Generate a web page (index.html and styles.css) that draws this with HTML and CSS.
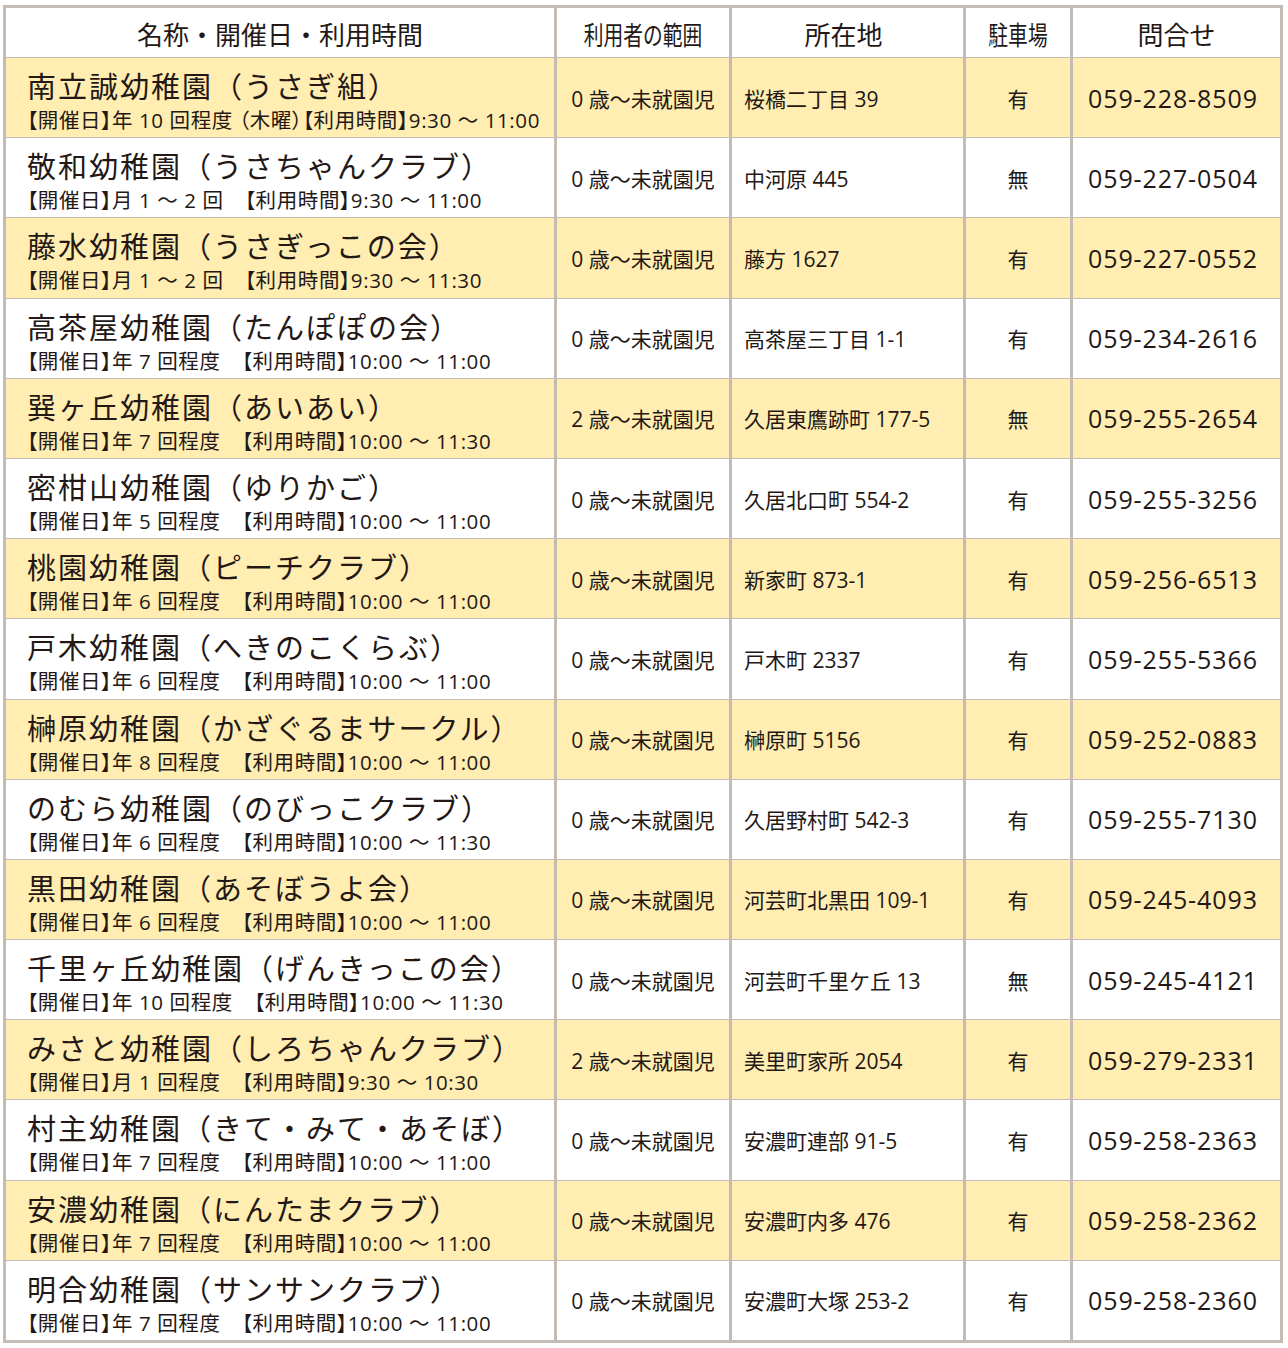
FILE: index.html
```html
<!DOCTYPE html>
<html lang="ja">
<head>
<meta charset="utf-8">
<title>幼稚園 未就園児の会</title>
<link rel="stylesheet" href="styles.css">
</head>
<body>
<div class="table">
  <div class="row head">
    <div class="cell c1">名称・開催日・利用時間</div>
    <div class="cell c2"><span class="narrow">利用者の範囲</span></div>
    <div class="cell c3">所在地</div>
    <div class="cell c4"><span class="narrow">駐車場</span></div>
    <div class="cell c5">問合せ</div>
  </div>

  <div class="row yellow">
    <div class="cell c1"><div class="name">南立誠幼稚園（うさぎ組）</div><div class="info">【開催日】年 10 回程度 （木曜）【利用時間】9:30 〜 11:00</div></div>
    <div class="cell c2">0 歳〜未就園児</div>
    <div class="cell c3">桜橋二丁目 39</div>
    <div class="cell c4">有</div>
    <div class="cell c5">059-228-8509</div>
  </div>
  <div class="row">
    <div class="cell c1"><div class="name">敬和幼稚園（うさちゃんクラブ）</div><div class="info">【開催日】月 1 〜 2 回　【利用時間】9:30 〜 11:00</div></div>
    <div class="cell c2">0 歳〜未就園児</div>
    <div class="cell c3">中河原 445</div>
    <div class="cell c4">無</div>
    <div class="cell c5">059-227-0504</div>
  </div>
  <div class="row yellow">
    <div class="cell c1"><div class="name">藤水幼稚園（うさぎっこの会）</div><div class="info">【開催日】月 1 〜 2 回　【利用時間】9:30 〜 11:30</div></div>
    <div class="cell c2">0 歳〜未就園児</div>
    <div class="cell c3">藤方 1627</div>
    <div class="cell c4">有</div>
    <div class="cell c5">059-227-0552</div>
  </div>
  <div class="row">
    <div class="cell c1"><div class="name">高茶屋幼稚園（たんぽぽの会）</div><div class="info">【開催日】年 7 回程度　【利用時間】10:00 〜 11:00</div></div>
    <div class="cell c2">0 歳〜未就園児</div>
    <div class="cell c3">高茶屋三丁目 1-1</div>
    <div class="cell c4">有</div>
    <div class="cell c5">059-234-2616</div>
  </div>
  <div class="row yellow">
    <div class="cell c1"><div class="name">巽ヶ丘幼稚園（あいあい）</div><div class="info">【開催日】年 7 回程度　【利用時間】10:00 〜 11:30</div></div>
    <div class="cell c2">2 歳〜未就園児</div>
    <div class="cell c3">久居東鷹跡町 177-5</div>
    <div class="cell c4">無</div>
    <div class="cell c5">059-255-2654</div>
  </div>
  <div class="row">
    <div class="cell c1"><div class="name">密柑山幼稚園（ゆりかご）</div><div class="info">【開催日】年 5 回程度　【利用時間】10:00 〜 11:00</div></div>
    <div class="cell c2">0 歳〜未就園児</div>
    <div class="cell c3">久居北口町 554-2</div>
    <div class="cell c4">有</div>
    <div class="cell c5">059-255-3256</div>
  </div>
  <div class="row yellow">
    <div class="cell c1"><div class="name">桃園幼稚園（ピーチクラブ）</div><div class="info">【開催日】年 6 回程度　【利用時間】10:00 〜 11:00</div></div>
    <div class="cell c2">0 歳〜未就園児</div>
    <div class="cell c3">新家町 873-1</div>
    <div class="cell c4">有</div>
    <div class="cell c5">059-256-6513</div>
  </div>
  <div class="row">
    <div class="cell c1"><div class="name">戸木幼稚園（へきのこくらぶ）</div><div class="info">【開催日】年 6 回程度　【利用時間】10:00 〜 11:00</div></div>
    <div class="cell c2">0 歳〜未就園児</div>
    <div class="cell c3">戸木町 2337</div>
    <div class="cell c4">有</div>
    <div class="cell c5">059-255-5366</div>
  </div>
  <div class="row yellow">
    <div class="cell c1"><div class="name">榊原幼稚園（かざぐるまサークル）</div><div class="info">【開催日】年 8 回程度　【利用時間】10:00 〜 11:00</div></div>
    <div class="cell c2">0 歳〜未就園児</div>
    <div class="cell c3">榊原町 5156</div>
    <div class="cell c4">有</div>
    <div class="cell c5">059-252-0883</div>
  </div>
  <div class="row">
    <div class="cell c1"><div class="name">のむら幼稚園（のびっこクラブ）</div><div class="info">【開催日】年 6 回程度　【利用時間】10:00 〜 11:30</div></div>
    <div class="cell c2">0 歳〜未就園児</div>
    <div class="cell c3">久居野村町 542-3</div>
    <div class="cell c4">有</div>
    <div class="cell c5">059-255-7130</div>
  </div>
  <div class="row yellow">
    <div class="cell c1"><div class="name">黒田幼稚園（あそぼうよ会）</div><div class="info">【開催日】年 6 回程度　【利用時間】10:00 〜 11:00</div></div>
    <div class="cell c2">0 歳〜未就園児</div>
    <div class="cell c3">河芸町北黒田 109-1</div>
    <div class="cell c4">有</div>
    <div class="cell c5">059-245-4093</div>
  </div>
  <div class="row">
    <div class="cell c1"><div class="name">千里ヶ丘幼稚園（げんきっこの会）</div><div class="info">【開催日】年 10 回程度　【利用時間】10:00 〜 11:30</div></div>
    <div class="cell c2">0 歳〜未就園児</div>
    <div class="cell c3">河芸町千里ケ丘 13</div>
    <div class="cell c4">無</div>
    <div class="cell c5">059-245-4121</div>
  </div>
  <div class="row yellow">
    <div class="cell c1"><div class="name">みさと幼稚園（しろちゃんクラブ）</div><div class="info">【開催日】月 1 回程度　【利用時間】9:30 〜 10:30</div></div>
    <div class="cell c2">2 歳〜未就園児</div>
    <div class="cell c3">美里町家所 2054</div>
    <div class="cell c4">有</div>
    <div class="cell c5">059-279-2331</div>
  </div>
  <div class="row">
    <div class="cell c1"><div class="name">村主幼稚園（きて・みて・あそぼ）</div><div class="info">【開催日】年 7 回程度　【利用時間】10:00 〜 11:00</div></div>
    <div class="cell c2">0 歳〜未就園児</div>
    <div class="cell c3">安濃町連部 91-5</div>
    <div class="cell c4">有</div>
    <div class="cell c5">059-258-2363</div>
  </div>
  <div class="row yellow">
    <div class="cell c1"><div class="name">安濃幼稚園（にんたまクラブ）</div><div class="info">【開催日】年 7 回程度　【利用時間】10:00 〜 11:00</div></div>
    <div class="cell c2">0 歳〜未就園児</div>
    <div class="cell c3">安濃町内多 476</div>
    <div class="cell c4">有</div>
    <div class="cell c5">059-258-2362</div>
  </div>
  <div class="row">
    <div class="cell c1"><div class="name">明合幼稚園（サンサンクラブ）</div><div class="info">【開催日】年 7 回程度　【利用時間】10:00 〜 11:00</div></div>
    <div class="cell c2">0 歳〜未就園児</div>
    <div class="cell c3">安濃町大塚 253-2</div>
    <div class="cell c4">有</div>
    <div class="cell c5">059-258-2360</div>
  </div>
</div>
</body>
</html>
```

FILE: styles.css
```css
html, body {
  margin: 0;
  padding: 0;
  background: #ffffff;
}

body {
  padding: 5px 0 0 3px;
  font-family: "Open Sans", "Noto Sans CJK JP", sans-serif;
  color: #231815;
}

.table {
  display: grid;
  grid-template-columns: 548px 172px 231px 104px 207px;
  grid-template-rows: 49px;
  grid-auto-rows: 79.2px;
  column-gap: 3px;
  row-gap: 1px;
  padding: 3px;
  width: 1280px;
  box-sizing: border-box;
  background: #c3bbb4;
}

.row {
  display: contents;
}

.cell {
  background: #ffffff;
  display: flex;
  align-items: center;
  font-size: 21px;
  white-space: nowrap;
  overflow: hidden;
  box-sizing: border-box;
}

.yellow > .cell {
  background: #ffedb1;
}

.c1 {
  flex-direction: column;
  align-items: flex-start;
  justify-content: flex-start;
  padding: 12px 0 0 21px;
}

.c2 {
  justify-content: center;
}

.c3 {
  padding-left: 12px;
}

.c4 {
  justify-content: center;
}

.c5 {
  padding-left: 15px;
  font-size: 25px;
  letter-spacing: 0.9px;
}

.head > .cell {
  justify-content: center;
  align-items: center;
  font-size: 26px;
  letter-spacing: 0;
  padding: 2px 0 0 0;
}

.head > .c3 {
  padding-right: 8px;
}

.narrow {
  display: inline-block;
  transform: scaleX(0.76);
}

.name {
  font-size: 29px;
  letter-spacing: 2px;
  line-height: 34px;
}

.info {
  margin-top: 3px;
  font-size: 20.5px;
  letter-spacing: 0.6px;
  line-height: 26px;
  font-feature-settings: "palt";
}
```
